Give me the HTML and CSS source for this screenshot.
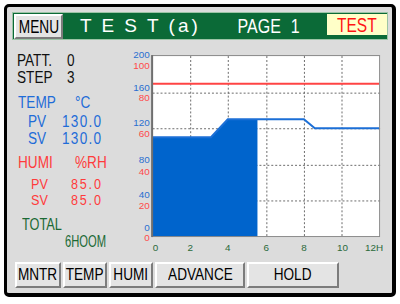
FILE: index.html
```html
<!DOCTYPE html>
<html lang="en">
<head>
    <meta charset="UTF-8">
    <title>TEST(a) PAGE 1</title>
    <link rel="stylesheet" href="styles.css">
</head>
<body>
    <div class="screen">
        <div class="topbar">
            <div class="key menu"><span>MENU</span></div>
            <div class="title">TEST<span class="paren">(a)</span></div>
            <div class="page"><span>PAGE 1</span></div>
            <div class="mode"><span>TEST</span></div>
        </div>

        <div class="main">
            <div class="status">
                <div class="block">
                    <div class="row"><span class="name">PATT.</span><span class="val">0</span></div>
                    <div class="row"><span class="name">STEP</span><span class="val">3</span></div>
                </div>

                <div class="block temp">
                    <div class="row head"><span class="name">TEMP</span><span>°C</span></div>
                    <div class="row reading"><span class="name">PV</span><span class="val">130.0</span></div>
                    <div class="row reading"><span class="name">SV</span><span class="val">130.0</span></div>
                </div>

                <div class="block humi">
                    <div class="row head"><span class="name">HUMI</span><span>%RH</span></div>
                    <div class="row reading first"><span class="name">PV</span><span class="val">85.0</span></div>
                    <div class="row reading"><span class="name">SV</span><span class="val">85.0</span></div>
                </div>

                <div class="block total">
                    <div class="row"><span class="total-label">TOTAL</span></div>
                    <div class="row hours"><span>6HOOM</span></div>
                </div>
            </div>

            <svg class="chart" width="272" height="210" viewBox="118 46 272 210">
                <rect class="plot" x="152" y="55" width="230" height="183"/>

                <!-- grid -->
                <line class="grid" x1="190.5" y1="55" x2="190.5" y2="238"/>
                <line class="grid" x1="228.5" y1="55" x2="228.5" y2="238"/>
                <line class="grid" x1="267.5" y1="55" x2="267.5" y2="238"/>
                <line class="grid" x1="305.5" y1="55" x2="305.5" y2="238"/>
                <line class="grid" x1="343.5" y1="55" x2="343.5" y2="238"/>
                <line class="grid" x1="152" y1="92.5" x2="382" y2="92.5"/>
                <line class="grid" x1="152" y1="128.5" x2="382" y2="128.5"/>
                <line class="grid" x1="152" y1="165.5" x2="382" y2="165.5"/>
                <line class="grid" x1="152" y1="201.5" x2="382" y2="201.5"/>

                <!-- humidity program -->
                <line class="humi-line" x1="152" y1="83" x2="381" y2="83"/>

                <!-- temperature program -->
                <polygon class="temp-fill" points="152,238 152,137 211,137 228,119 258,119 258,238"/>
                <polyline class="temp-line" points="152,137 211,137 228,119 305,119 316,128 381,128"/>

                <rect class="frame" x="151.5" y="54.5" width="230" height="183"/>
                <line class="frame-edge" x1="151.5" y1="54" x2="151.5" y2="238"/>

                <!-- temp scale -->
                <text class="ytemp" x="149" y="57">200</text>
                <text class="ytemp" x="149" y="90">160</text>
                <text class="ytemp" x="149" y="126">120</text>
                <text class="ytemp" x="149" y="163">80</text>
                <text class="ytemp" x="149" y="199">40</text>
                <text class="ytemp" x="149" y="232">0</text>
                <!-- humi scale -->
                <text class="yhumi" x="149" y="68">100</text>
                <text class="yhumi" x="149" y="100">80</text>
                <text class="yhumi" x="149" y="137">60</text>
                <text class="yhumi" x="149" y="175">40</text>
                <text class="yhumi" x="149" y="210">20</text>
                <text class="yhumi" x="149" y="242">0</text>
                <!-- hours -->
                <text class="xlab" x="155" y="252">0</text>
                <text class="xlab" x="190" y="252">2</text>
                <text class="xlab" x="228" y="252">4</text>
                <text class="xlab" x="267" y="252">6</text>
                <text class="xlab" x="305" y="252">8</text>
                <text class="xlab" x="344" y="252">10</text>
                <text class="xlab" x="376" y="252">12H</text>
            </svg>
        </div>

        <div class="keys">
            <div class="key k-mntr"><span>MNTR</span></div>
            <div class="key k-temp"><span>TEMP</span></div>
            <div class="key k-humi"><span>HUMI</span></div>
            <div class="key k-adv"><span>ADVANCE</span></div>
            <div class="key k-hold"><span>HOLD</span></div>
        </div>
    </div>
</body>
</html>
```

FILE: styles.css
```css
body {
    margin: 0;
    background-color: #fff;
    font-family: "Liberation Sans", Arial, sans-serif;
}

.screen {
    box-sizing: border-box;
    width: 392px;
    height: 293px;
    margin: 4px;
    padding: 5px 4px 0 5px;
    background-color: #dcdcdc;
    border: 3px solid #000;
    border-right-width: 4px;
    border-bottom-width: 4px;
    border-radius: 5px;
}

/* top bar */
.topbar {
    box-sizing: border-box;
    height: 28px;
    display: flex;
    align-items: flex-start;
    background-color: #0b6a37;
    border: 1px solid #9cc4a6;
}

.key {
    box-sizing: border-box;
    display: flex;
    align-items: center;
    justify-content: center;
    background-color: #e4e4e4;
    border: 2px solid;
    border-color: #fff #7c7c7c #7c7c7c #fff;
    color: #000;
    font-size: 17px;
    white-space: nowrap;
}

/* the panel font is a narrow one */
.key span {
    display: inline-block;
    transform: scaleX(0.8);
}

.menu {
    width: 49px;
    height: 25px;
    margin: 1px 0 0 1px;
    font-size: 19px;
}

.menu span {
    transform: scaleX(0.72);
}

.title {
    flex: 1;
    margin-left: 17px;
    color: #fff;
    font-size: 19px;
    line-height: 26px;
    letter-spacing: 10px;
}

.title .paren {
    letter-spacing: 3px;
}

.page {
    margin-right: 27px;
    color: #fff;
    font-size: 20px;
    line-height: 26px;
    word-spacing: 7px;
    white-space: nowrap;
}

.page span {
    display: inline-block;
    transform: scaleX(0.8);
    transform-origin: 100% 50%;
}

.mode {
    width: 60px;
    height: 21px;
    margin-top: 1px;
    background-color: #ffffc8;
    color: #ff1414;
    font-size: 21px;
    line-height: 22px;
    text-align: center;
}

.mode span {
    display: inline-block;
    transform: scaleX(0.74);
}

/* main area */
.main {
    height: 222px;
    display: flex;
}

.status {
    width: 101px;
    padding-left: 5px;
    font-size: 16px;
    color: #111;
}

.row {
    line-height: 17px;
    white-space: nowrap;
}

.row span {
    display: inline-block;
    transform: scaleX(0.85);
    transform-origin: 0 50%;
}

.row .name {
    width: 50px;
}

.val {
    letter-spacing: 1.5px;
}

.block {
    margin-top: 12px;
}

.temp {
    margin-top: 8px;
    color: #1f6cd8;
}

.humi {
    margin-top: 7px;
    color: #ff3b3b;
}

.head {
    padding-left: 1px;
}

.head .name {
    width: 57px;
}

.temp .reading {
    padding-left: 11px;
}

.temp .reading .name {
    width: 34px;
}

.temp .head + .reading {
    margin-top: 2px;
}

.humi .reading {
    padding-left: 14px;
    font-size: 14px;
    line-height: 16px;
}

.humi .reading span {
    transform: scaleX(0.9);
}

.humi .reading .name {
    width: 40px;
}

.humi .reading .val {
    letter-spacing: 2px;
}

.humi .first {
    margin-top: 5px;
}

.total {
    margin-top: 8px;
    padding-left: 5px;
    color: #1b6a34;
}

.total-label {
    font-size: 17px;
}

.row .total-label {
    transform: scaleX(0.75);
}

.hours {
    padding-left: 43px;
}

.hours span {
    transform: scaleX(0.7);
}

.chart {
    margin: 6px 0 0 1px;
}

.plot {
    fill: #fff;
}

.grid {
    stroke: #6a6a6a;
    stroke-width: 1;
    stroke-dasharray: 2 2;
}

.frame {
    fill: none;
    stroke: #8a8a8a;
    stroke-width: 1;
}

.frame-edge {
    stroke: #6f6f6f;
    stroke-width: 2;
}

.humi-line {
    stroke: #ff4444;
    stroke-width: 2;
}

.temp-fill {
    fill: #0064cc;
}

.temp-line {
    fill: none;
    stroke: #1c6fd6;
    stroke-width: 2;
}

.ytemp,
.yhumi {
    font-size: 10px;
    text-anchor: end;
}

.ytemp {
    fill: #2a6fd0;
}

.yhumi {
    fill: #ff4a4a;
}

.xlab {
    font-size: 10px;
    text-anchor: middle;
    fill: #2b6a3a;
}

/* soft keys */
.keys {
    display: flex;
    gap: 2px;
    padding-left: 3px;
}

.keys .key {
    height: 26px;
}

.k-mntr { width: 46px; }
.k-temp { width: 44px; }
.k-humi { width: 44px; }
.k-adv  { width: 90px; }
.k-hold { width: 92px; }
```
